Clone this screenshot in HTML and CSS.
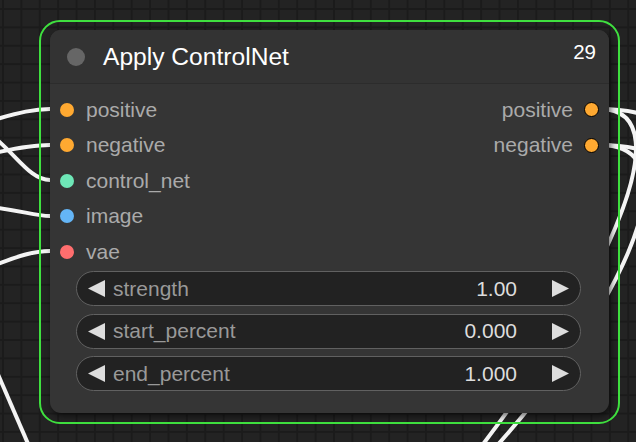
FILE: index.html
```html
<!DOCTYPE html>
<html lang="en">
<head>
  <meta charset="UTF-8">
  <title>Apply ControlNet</title>
  <link rel="stylesheet" href="styles.css">
</head>
<body>
  <div class="canvas">
    <svg class="links" width="636" height="442" viewBox="0 0 636 442">
      <path d="M-10,121 C20,112 35,109 50,109" />
      <path d="M-10,154 C20,147 35,145 50,145" />
      <path d="M-30,122 C10,140 25,180 50,180" />
      <path d="M-10,207 C20,210 35,216 50,216" />
      <path d="M-10,267 C20,255 35,251 50,251" />
      <path d="M-3,372 L29,446" />
      <path d="M600,109 C690,109 600,300 455,480" />
      <path d="M600,109 C625,109 640,113 650,117" />
      <path d="M600,145 C700,145 620,320 465,480" />
      <path d="M600,145 C625,145 640,149 650,153" />
    </svg>

    <div class="selection">
      <div class="node">
        <div class="node-title">
          <span class="title-dot"></span>
          <span class="title-text">Apply ControlNet</span>
          <span class="node-id">29</span>
        </div>

        <div class="slots">
          <div class="slot-row">
            <div class="slot"><span class="dot cond"></span>positive</div>
            <div class="slot out">positive<span class="dot cond"></span></div>
          </div>
          <div class="slot-row">
            <div class="slot"><span class="dot cond"></span>negative</div>
            <div class="slot out">negative<span class="dot cond"></span></div>
          </div>
          <div class="slot-row">
            <div class="slot"><span class="dot cnet"></span>control_net</div>
          </div>
          <div class="slot-row">
            <div class="slot"><span class="dot image"></span>image</div>
          </div>
          <div class="slot-row">
            <div class="slot"><span class="dot vae"></span>vae</div>
          </div>
        </div>

        <div class="widgets">
          <div class="widget">
            <svg class="arrow" width="17" height="17" viewBox="0 0 17 17"><polygon points="17,0 0,8.5 17,17" /></svg>
            <span class="w-label">strength</span>
            <span class="w-value">1.00</span>
            <svg class="arrow" width="17" height="17" viewBox="0 0 17 17"><polygon points="0,0 17,8.5 0,17" /></svg>
          </div>
          <div class="widget">
            <svg class="arrow" width="17" height="17" viewBox="0 0 17 17"><polygon points="17,0 0,8.5 17,17" /></svg>
            <span class="w-label">start_percent</span>
            <span class="w-value">0.000</span>
            <svg class="arrow" width="17" height="17" viewBox="0 0 17 17"><polygon points="0,0 17,8.5 0,17" /></svg>
          </div>
          <div class="widget">
            <svg class="arrow" width="17" height="17" viewBox="0 0 17 17"><polygon points="17,0 0,8.5 17,17" /></svg>
            <span class="w-label">end_percent</span>
            <span class="w-value">1.000</span>
            <svg class="arrow" width="17" height="17" viewBox="0 0 17 17"><polygon points="0,0 17,8.5 0,17" /></svg>
          </div>
        </div>
      </div>
    </div>
  </div>
</body>
</html>
```

FILE: styles.css
```css
body {
  margin: 0;
  background-color: #222;
  font-family: "Liberation Sans", Arial, sans-serif;
}

.canvas {
  position: relative;
  width: 636px;
  height: 442px;
  overflow: hidden;
  background-color: #232323;
  background-image:
    linear-gradient(to right, #1b1b1b 2px, transparent 2px),
    linear-gradient(to bottom, #1b1b1b 2px, transparent 2px);
  background-size: 18.4px 18.4px;
  background-position: 2px 8px;
}

.links {
  position: absolute;
  left: 0;
  top: 0;
}
.links path {
  fill: none;
  stroke: #f4f4f4;
  stroke-width: 4;
}

/* selected node on the canvas */
.selection {
  position: absolute;
  left: 39px;
  top: 20px;
  padding: 8px 9px 9px 9px;
  border: 2px solid #3fe03f;
  border-radius: 21px;
}

.node {
  width: 559px;
  background-color: #353535;
  border-radius: 11px;
  box-shadow: 2px 3px 6px rgba(0, 0, 0, 0.55);
  padding-bottom: 22px;
}

.node-title {
  display: flex;
  align-items: center;
  height: 53px;
  padding: 0 13px 0 17px;
  background-color: #333;
  border-radius: 11px 11px 0 0;
  border-bottom: 1px solid #2c2c2c;
}
.title-dot {
  width: 18px;
  height: 18px;
  border-radius: 50%;
  background-color: #666;
  margin-right: 18px;
}
.title-text {
  color: #fff;
  font-size: 24.6px;
}
.node-id {
  margin-left: auto;
  align-self: flex-start;
  margin-top: 12px;
  color: #fff;
  font-size: 20.5px;
  line-height: 1;
}

.slots {
  padding-top: 8px;
}
.slot-row {
  display: flex;
  justify-content: space-between;
  align-items: center;
  height: 35.5px;
}
.slot {
  display: flex;
  align-items: center;
  gap: 12px;
  padding-left: 10px;
  color: #aaa;
  font-size: 21px;
}
.slot.out {
  padding-left: 0;
  padding-right: 10px;
  gap: 11px;
}
.dot {
  width: 14px;
  height: 14px;
  border-radius: 50%;
}
.slot.out .dot {
  width: 15px;
  height: 15px;
  box-sizing: border-box;
  border: 1px solid #000;
}
.cond { background-color: #ffa931; }
.cnet { background-color: #6ee7b7; }
.image { background-color: #64b5f6; }
.vae { background-color: #ff6e6e; }

.widgets {
  display: flex;
  flex-direction: column;
  gap: 7.5px;
  padding: 1.5px 28px 0 26px;
}
.widget {
  display: flex;
  align-items: center;
  height: 35px;
  box-sizing: border-box;
  padding: 0 11px;
  background-color: #222;
  border: 1px solid #616161;
  border-radius: 18px;
  font-size: 21px;
}
.arrow polygon {
  fill: #ddd;
}
.w-label {
  margin-left: 8px;
  color: #999;
}
.w-value {
  margin-left: auto;
  margin-right: 35px;
  color: #ddd;
}
```
